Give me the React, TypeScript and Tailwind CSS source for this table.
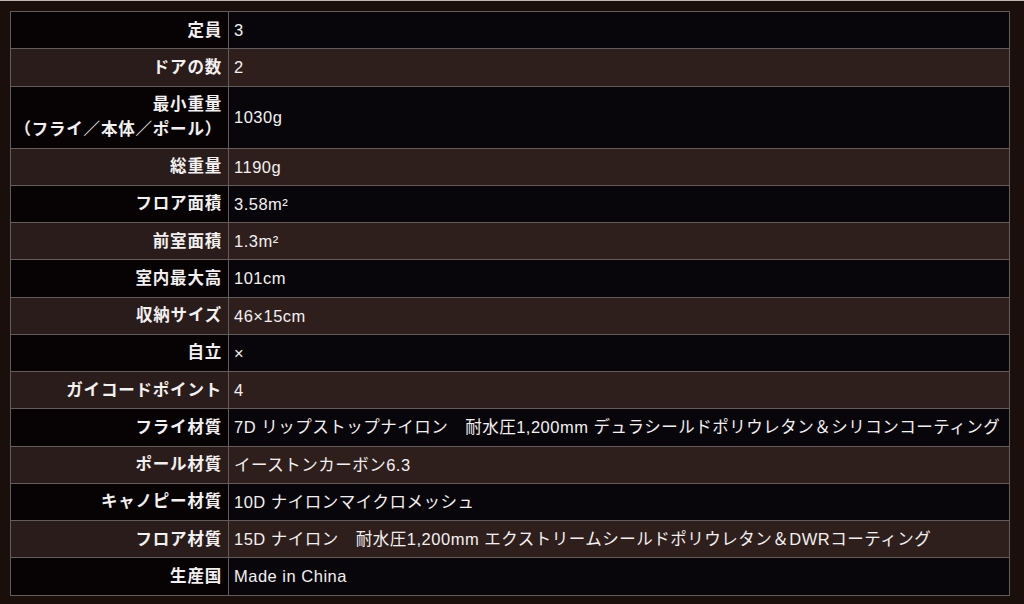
import React from "react";

const rows: [string[], string][] = [
  [["定員"], "3"],
  [["ドアの数"], "2"],
  [["最小重量", "（フライ／本体／ポール）"], "1030g"],
  [["総重量"], "1190g"],
  [["フロア面積"], "3.58m²"],
  [["前室面積"], "1.3m²"],
  [["室内最大高"], "101cm"],
  [["収納サイズ"], "46×15cm"],
  [["自立"], "×"],
  [["ガイコードポイント"], "4"],
  [["フライ材質"], "7D リップストップナイロン　耐水圧1,200mm デュラシールドポリウレタン＆シリコンコーティング"],
  [["ポール材質"], "イーストンカーボン6.3"],
  [["キャノピー材質"], "10D ナイロンマイクロメッシュ"],
  [["フロア材質"], "15D ナイロン　耐水圧1,200mm エクストリームシールドポリウレタン＆DWRコーティング"],
  [["生産国"], "Made in China"],
];

export default function App() {
  return (
    <div
      className="w-[1024px] h-[604px] bg-[#1b0f0c] border-t border-[#bfb7b0] pt-[10px] pl-[10px] overflow-hidden"
      style={{ fontFamily: '"Liberation Sans", "Noto Sans CJK JP", sans-serif' }}
    >
      <table className="w-[1000px] border-collapse border border-[#777171] text-[16.5px] text-[#f2f0f0]">
        <tbody>
          {rows.map(([label, value], i) => {
            const even = i % 2 === 1;
            const tall = label.length > 1;
            return (
              <tr key={i} className={tall ? "h-[62px]" : "h-[37.25px]"}>
                <th
                  className={`w-[218px] border border-[#625c5b] pr-[6px] text-right font-bold leading-[25px] tracking-[0.8px] ${
                    even ? "bg-[#2a1c1a]" : "bg-[#070305]"
                  }`}
                >
                  {label.map((l, j) => (
                    <div key={j}>{l}</div>
                  ))}
                </th>
                <td
                  className={`border border-[#625c5b] pl-[5px] text-left font-normal leading-[20px] tracking-[0.5px] whitespace-nowrap ${
                    even ? "bg-[#2e1f1d]" : "bg-[#08060a]"
                  }`}
                >
                  {value}
                </td>
              </tr>
            );
          })}
        </tbody>
      </table>
    </div>
  );
}
